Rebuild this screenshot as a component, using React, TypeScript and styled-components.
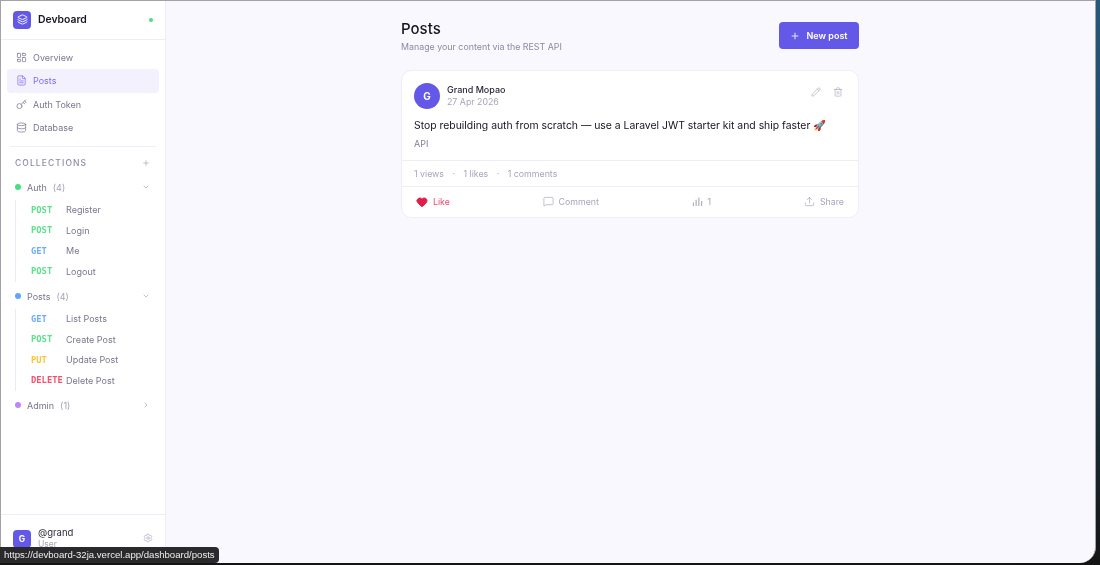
import React from 'react'
import styled, { createGlobalStyle } from 'styled-components'
import {
  ChevronDown,
  ChevronRight,
  Database,
  FileText,
  Heart,
  Key,
  Layers,
  LayoutDashboard,
  MessageSquare,
  Pencil,
  Plus,
  Settings,
  Trash2,
  Upload,
} from 'lucide-react'

const GlobalStyle = createGlobalStyle`
  html, body {
    margin: 0;
    padding: 0;
    height: 100%;
    overflow: hidden;
  }
  body {
    font-family: Inter, "Liberation Sans", sans-serif;
    -webkit-font-smoothing: antialiased;
  }
`

type Method = 'GET' | 'POST' | 'PUT' | 'DELETE'

const methodColors: Record<Method, string> = {
  GET: '#60a5fa',
  POST: '#4ade80',
  PUT: '#fbbf24',
  DELETE: '#f43f5e',
}

const collections: {
  name: string
  count: number
  dot: string
  open: boolean
  routes: { method: Method; label: string }[]
}[] = [
  {
    name: 'Auth',
    count: 4,
    dot: '#4ade80',
    open: true,
    routes: [
      { method: 'POST', label: 'Register' },
      { method: 'POST', label: 'Login' },
      { method: 'GET', label: 'Me' },
      { method: 'POST', label: 'Logout' },
    ],
  },
  {
    name: 'Posts',
    count: 4,
    dot: '#60a5fa',
    open: true,
    routes: [
      { method: 'GET', label: 'List Posts' },
      { method: 'POST', label: 'Create Post' },
      { method: 'PUT', label: 'Update Post' },
      { method: 'DELETE', label: 'Delete Post' },
    ],
  },
  { name: 'Admin', count: 1, dot: '#c084fc', open: false, routes: [] },
]

const App: React.FC = () => {
  return (
    <Desktop>
      <GlobalStyle />
      <Window>
        <Sidebar>
          <Brand>
            <LogoBox>
              <Layers size={11} color="#fff" strokeWidth={2} />
            </LogoBox>
            <BrandName>Devboard</BrandName>
            <StatusDot />
          </Brand>

          <Nav>
            <NavItem>
              <LayoutDashboard size={11} strokeWidth={1.6} />
              Overview
            </NavItem>
            <NavItem $active>
              <FileText size={11} strokeWidth={1.6} />
              Posts
            </NavItem>
            <NavItem>
              <Key size={11} strokeWidth={1.6} />
              Auth Token
            </NavItem>
            <NavItem>
              <Database size={11} strokeWidth={1.6} />
              Database
            </NavItem>
          </Nav>

          <SideDivider />

          <CollectionsHead>
            COLLECTIONS
            <Plus size={8} strokeWidth={1.6} />
          </CollectionsHead>

          {collections.map((c) => (
            <Collection key={c.name}>
              <CollectionRow>
                <Dot $color={c.dot} />
                <CollectionName>{c.name}</CollectionName>
                <CollectionCount>({c.count})</CollectionCount>
                <Caret>
                  {c.open ? <ChevronDown size={8} /> : <ChevronRight size={8} />}
                </Caret>
              </CollectionRow>
              {c.open && (
                <Routes>
                  {c.routes.map((r) => (
                    <RouteRow key={r.label}>
                      <MethodTag $method={r.method}>{r.method}</MethodTag>
                      <RouteLabel>{r.label}</RouteLabel>
                    </RouteRow>
                  ))}
                </Routes>
              )}
            </Collection>
          ))}

          <SideFooter>
            <FooterAvatar>G</FooterAvatar>
            <FooterText>
              <FooterName>@grand</FooterName>
              <FooterRole>User</FooterRole>
            </FooterText>
            <FooterGear>
              <Settings size={10} strokeWidth={1.5} color="#a9a9c0" />
            </FooterGear>
          </SideFooter>
        </Sidebar>

        <Main>
          <Column>
            <PageHead>
              <div>
                <Title>Posts</Title>
                <Subtitle>Manage your content via the REST API</Subtitle>
              </div>
              <NewPostButton>
                <Plus size={10} strokeWidth={2} />
                New post
              </NewPostButton>
            </PageHead>

            <Card>
              <CardBody>
                <AuthorRow>
                  <Avatar>G</Avatar>
                  <AuthorText>
                    <AuthorName>Grand Mopao</AuthorName>
                    <PostDate>27 Apr 2026</PostDate>
                  </AuthorText>
                  <CardTools>
                    <Pencil size={10} strokeWidth={1.5} />
                    <Trash2 size={10} strokeWidth={1.5} />
                  </CardTools>
                </AuthorRow>
                <PostText>
                  Stop rebuilding auth from scratch — use a Laravel JWT starter kit and ship faster 🚀
                </PostText>
                <PostTag>API</PostTag>
              </CardBody>

              <Stats>
                <span>1 views</span>
                <StatSep>·</StatSep>
                <span>1 likes</span>
                <StatSep>·</StatSep>
                <span>1 comments</span>
              </Stats>

              <Actions>
                <Action $liked>
                  <Heart size={12} fill="#e11d48" color="#e11d48" strokeWidth={2} />
                  Like
                </Action>
                <Action>
                  <MessageSquare size={11} strokeWidth={1.5} />
                  Comment
                </Action>
                <Action>
                  <svg width="11" height="11" viewBox="0 0 12 12" fill="none" stroke="currentColor" strokeWidth="1.2">
                    <path d="M1.5 11V7M4.5 11V4M7.5 11V1.5M10.5 11V5.5" />
                  </svg>
                  1
                </Action>
                <Action>
                  <Upload size={11} strokeWidth={1.5} />
                  Share
                </Action>
              </Actions>
            </Card>
          </Column>
        </Main>
      </Window>
      <StatusTooltip>https://devboard-32ja.vercel.app/dashboard/posts</StatusTooltip>
    </Desktop>
  )
}

const Desktop = styled.div`
  position: relative;
  width: 1100px;
  height: 565px;
  overflow: hidden;
  background: linear-gradient(180deg, #24597a 0%, #1d3a4a 60%, #141414 100%);
  filter: blur(0.3px);
`

const Window = styled.div`
  display: flex;
  width: 1096px;
  height: 563px;
  box-sizing: border-box;
  border: 1px solid #a3a3a6;
  border-bottom: none;
  border-radius: 0 0 16px 0;
  overflow: hidden;
  background: #f9f8ff;
`

const Sidebar = styled.aside`
  display: flex;
  flex-direction: column;
  flex: none;
  width: 165px;
  box-sizing: border-box;
  background: #fff;
  border-right: 1px solid #efeef8;
`

const Brand = styled.div`
  display: flex;
  align-items: center;
  gap: 7px;
  height: 39px;
  flex: none;
  box-sizing: border-box;
  padding: 0 12px 1px 12px;
  border-bottom: 1px solid #efeef8;
`

const LogoBox = styled.div`
  display: flex;
  flex: none;
  align-items: center;
  justify-content: center;
  width: 18px;
  height: 18px;
  border-radius: 4px;
  background: #6358e8;
`

const BrandName = styled.div`
  flex: 1;
  font-size: 10.4px;
  font-weight: 600;
  color: #17172a;
`

const StatusDot = styled.span`
  width: 4px;
  height: 4px;
  border-radius: 50%;
  background: #4ade80;
`

const Nav = styled.nav`
  display: flex;
  flex-direction: column;
  padding: 5.5px 6px 0;
`

const NavItem = styled.div<{ $active?: boolean }>`
  display: flex;
  align-items: center;
  gap: 6px;
  height: 23.5px;
  padding: 0 9px;
  border-radius: 4px;
  font-size: 9px;
  color: ${(p) => (p.$active ? '#7c70ee' : '#77778e')};
  background: ${(p) => (p.$active ? '#f3f1fe' : 'transparent')};
`

const SideDivider = styled.div`
  flex: none;
  height: 1px;
  margin: 6px 9px 0;
  background: #efeef8;
`

const CollectionsHead = styled.div`
  display: flex;
  align-items: center;
  justify-content: space-between;
  height: 32px;
  padding: 0 15px 0 14px;
  font-size: 8.5px;
  font-weight: 500;
  letter-spacing: 1.1px;
  color: #8d8da5;
`

const Collection = styled.div`
  display: flex;
  flex-direction: column;
`

const CollectionRow = styled.div`
  display: flex;
  align-items: center;
  height: 17px;
  margin-bottom: 4px;
  padding: 0 15px 0 14px;
  font-size: 9px;
  color: #77778e;
`

const Dot = styled.span<{ $color: string }>`
  width: 6px;
  height: 6px;
  margin-right: 6px;
  border-radius: 50%;
  background: ${(p) => p.$color};
`

const CollectionName = styled.span`
  margin-right: 6px;
`

const CollectionCount = styled.span`
  flex: 1;
  color: #a3a3b8;
`

const Caret = styled.span`
  display: flex;
  color: #a3a3b8;
`

const Routes = styled.div`
  display: flex;
  flex-direction: column;
  margin: 0 0 6px 14px;
  border-left: 1px solid #ebeaf6;
`

const RouteRow = styled.div`
  display: flex;
  align-items: center;
  height: 20.5px;
  padding-left: 15px;
`

const MethodTag = styled.span<{ $method: Method }>`
  width: 35px;
  flex: none;
  font-family: "DejaVu Sans Mono", "Liberation Mono", monospace;
  font-size: 8.8px;
  font-weight: 700;
  opacity: 0.9;
  color: ${(p) => methodColors[p.$method]};
`

const RouteLabel = styled.span`
  font-size: 9px;
  color: #77778e;
`

const SideFooter = styled.div`
  display: flex;
  align-items: flex-start;
  gap: 7px;
  margin-top: auto;
  height: 49px;
  flex: none;
  box-sizing: border-box;
  padding: 15px 12px 0;
  border-top: 1px solid #efeef8;
`

const FooterAvatar = styled(LogoBox)`
  color: #fff;
  font-size: 8.5px;
  font-weight: 700;
`

const FooterText = styled.div`
  flex: 1;
  display: flex;
  flex-direction: column;
`

const FooterName = styled.div`
  font-size: 9.5px;
  line-height: 12px;
  margin-top: -3px;
  color: #2a2a3c;
`

const FooterRole = styled.div`
  font-size: 8.5px;
  line-height: 11px;
  color: #a3a3b8;
`

const FooterGear = styled.span`
  display: flex;
  margin-top: 3px;
`

const StatusTooltip = styled.div`
  position: absolute;
  left: 0;
  bottom: 2px;
  height: 16px;
  line-height: 16px;
  padding: 0 4px;
  border-radius: 0 4px 4px 0;
  background: #2a2a2c;
  color: #eeeeee;
  font-family: "Liberation Sans", Arial, sans-serif;
  font-size: 9.6px;
  white-space: nowrap;
`

const Main = styled.main`
  flex: 1;
  display: flex;
  justify-content: center;
  padding-right: 1px;
`

const Column = styled.div`
  width: 458px;
  padding-top: 19px;
`

const PageHead = styled.div`
  display: flex;
  align-items: flex-start;
  justify-content: space-between;
  height: 50px;
`

const Title = styled.h1`
  margin: 0;
  font-size: 15px;
  line-height: 18px;
  font-weight: 500;
  color: #15151f;
`

const Subtitle = styled.p`
  margin: 3px 0 0;
  font-size: 8.85px;
  line-height: 12px;
  color: #8a8aa2;
`

const NewPostButton = styled.button`
  display: flex;
  align-items: center;
  justify-content: center;
  gap: 6px;
  width: 80px;
  height: 27px;
  margin-top: 2px;
  padding: 0;
  border: 0;
  border-radius: 4px;
  background: #6358e8;
  color: #fff;
  font-family: inherit;
  font-size: 9px;
  font-weight: 600;
`

const Card = styled.article`
  box-sizing: border-box;
  height: 148px;
  border: 1px solid #eeedf8;
  border-radius: 10px;
  background: #fff;
  overflow: hidden;
`

const CardBody = styled.div`
  height: 90px;
  box-sizing: border-box;
  padding: 12px 12px 0;
  border-bottom: 1px solid #efeef8;
`

const AuthorRow = styled.div`
  display: flex;
  align-items: center;
  gap: 7px;
`

const Avatar = styled.div`
  display: flex;
  align-items: center;
  justify-content: center;
  width: 26px;
  height: 26px;
  border-radius: 50%;
  background: #6358e8;
  color: #fff;
  font-size: 10px;
  font-weight: 700;
`

const AuthorText = styled.div`
  flex: 1;
  display: flex;
  flex-direction: column;
  margin-top: -1px;
`

const AuthorName = styled.div`
  font-size: 9px;
  line-height: 12px;
  font-weight: 500;
  color: #26263a;
`

const PostDate = styled.div`
  font-size: 8.8px;
  line-height: 11px;
  color: #a6a6bc;
`

const CardTools = styled.div`
  display: flex;
  gap: 12px;
  align-items: center;
  margin: -9px 3px 0 0;
  color: #a6a6bc;
`

const PostText = styled.p`
  margin: 9px 0 0;
  font-size: 10.4px;
  line-height: 15px;
  color: #14141f;
  white-space: nowrap;
`

const PostTag = styled.div`
  margin-top: 5px;
  font-size: 9px;
  line-height: 12px;
  color: #80809a;
`

const Stats = styled.div`
  display: flex;
  align-items: center;
  gap: 8px;
  height: 25px;
  padding: 0 12px;
  font-size: 8.8px;
  color: #a6a6bc;
  border-bottom: 1px solid #efeef8;
`

const StatSep = styled.span`
  margin: 0 0.5px;
`

const Actions = styled.div`
  display: flex;
  align-items: center;
  justify-content: space-between;
  height: 29px;
  padding: 0 14px;
`

const Action = styled.div<{ $liked?: boolean }>`
  display: flex;
  align-items: center;
  gap: 5px;
  font-size: 8.8px;
  color: ${(p) => (p.$liked ? '#ef476f' : '#a6a6bc')};
`

export default App
